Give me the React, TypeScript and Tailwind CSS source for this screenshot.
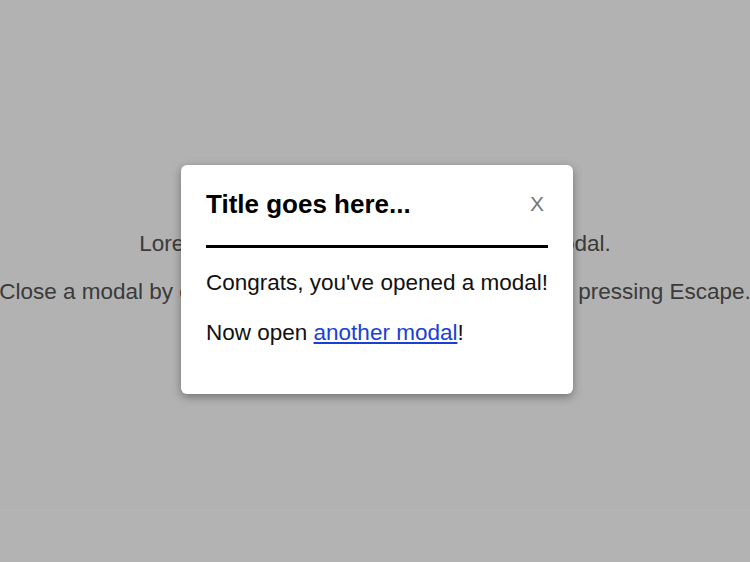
import React from "react";

export default function App() {
  return (
    <div className="relative h-[562px] w-[750px] overflow-hidden bg-white font-['Liberation_Sans',Arial,sans-serif] text-[22.5px] text-[#555]">
      <div className="flex h-full flex-col items-center justify-center pb-[26px] text-center">
        <p className="whitespace-nowrap leading-[26px]">Lorem ipsum. Click the button to open a modal.</p>
        <p className="mt-[22px] whitespace-nowrap leading-[26px]">Close a modal by clicking the X button, clicking outside or pressing Escape.</p>
      </div>
      <div className="absolute inset-0 flex items-center justify-center bg-black/30">
        <div className="ml-[4px] mt-[-3px] w-[392px] rounded-[6px] bg-white px-[25px] pb-[47px] pt-[24px] shadow-[0_3px_10px_rgba(0,0,0,0.35)]">
          <div className="flex items-center justify-between border-b-[3px] border-black pb-[26px]">
            <h2 className="text-[26px] font-bold leading-[30px] text-black">Title goes here...</h2>
            <span className="mr-[4px] text-[21px] font-light leading-[30px] text-[#777]">X</span>
          </div>
          <p className="mt-[21px] leading-[28px] text-[#111]">Congrats, you've opened a modal!</p>
          <p className="mt-[22px] leading-[28px] text-[#111]">
            Now open <a href="#" className="text-[#1a3fd6] underline">another modal</a>!
          </p>
        </div>
      </div>
    </div>
  );
}
